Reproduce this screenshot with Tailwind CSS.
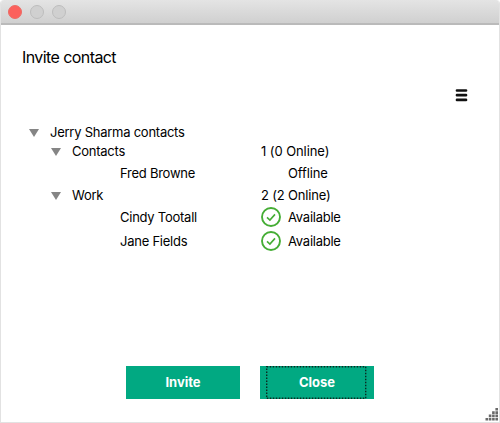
<!DOCTYPE html>
<html lang="en">
<head>
<meta charset="utf-8">
<title>Invite contact</title>
<script src="https://cdn.jsdelivr.net/npm/@tailwindcss/browser@4"></script>
</head>
<body class="bg-white">
<div class="relative flex h-[423px] w-[500px] flex-col overflow-hidden rounded-t-[4px] border-x border-b border-[#e2e2e2] bg-white font-['Inter',sans-serif] text-[13px] text-black">
  <header class="flex h-[25px] shrink-0 items-center gap-2 border-b-2 border-[#bababa] bg-linear-to-b from-[#e4e4e4] to-[#d0d0d0] pl-[7px]">
    <span class="size-3.5 rounded-full border border-[#ec6b65] bg-[#fc605c]"></span>
    <span class="size-3.5 rounded-full border border-[#bdbdbd] bg-[#d0d0d0]"></span>
    <span class="size-3.5 rounded-full border border-[#bdbdbd] bg-[#d0d0d0]"></span>
  </header>
  <main class="flex grow flex-col">
    <h1 class="mt-5 pl-[21px] text-[16px] leading-6 tracking-[-0.58px]">Invite contact</h1>
    <div class="mt-5 flex justify-end pr-[31px]">
      <svg class="h-[13px] w-[13px]" viewBox="0 0 13 13" stroke="#111" stroke-width="2.7" stroke-linecap="round"><path d="M2 1.5H11M2 6.2H11M2 10.9H11"/></svg>
    </div>
    <div class="mt-[21px] flex flex-col tracking-[-0.25px]">
      <div class="flex h-5 items-center pl-7"><svg class="mr-[11px] h-2 w-[10px]" viewBox="0 0 10 8" fill="#858585"><path d="M0 0H10L5 8Z"/></svg><span>Jerry Sharma contacts</span></div>
      <div class="flex h-[18px] items-center pl-[50px]"><svg class="mr-[11px] h-2 w-[10px]" viewBox="0 0 10 8" fill="#858585"><path d="M0 0H10L5 8Z"/></svg><span class="w-[189px]">Contacts</span><span class="tracking-[-0.08px]">1 (0 Online)</span></div>
      <div class="flex h-[26px] items-center pl-[119px]"><span class="w-[168px]">Fred Browne</span><span class="tracking-[-0.12px]">Offline</span></div>
      <div class="flex h-[18px] items-center pl-[50px]"><svg class="mr-[11px] h-2 w-[10px]" viewBox="0 0 10 8" fill="#858585"><path d="M0 0H10L5 8Z"/></svg><span class="w-[189px]">Work</span><span class="tracking-[-0.17px]">2 (2 Online)</span></div>
      <div class="flex h-[26px] items-center pl-[119px]"><span class="w-[141px]">Cindy Tootall</span><svg class="mr-[7px] mb-0.5 size-5" viewBox="0 0 20 20" fill="none" stroke="#45ad35"><circle cx="10" cy="10" r="9" stroke-width="1.9"/><path d="M6 10.3L8.9 13L14 7.4" stroke-width="1.6"/></svg><span>Available</span></div>
      <div class="flex h-[22px] items-center pl-[119px]"><span class="w-[141px]">Jane Fields</span><svg class="mr-[7px] mb-0.5 size-5" viewBox="0 0 20 20" fill="none" stroke="#45ad35"><circle cx="10" cy="10" r="9" stroke-width="1.9"/><path d="M6 10.3L8.9 13L14 7.4" stroke-width="1.6"/></svg><span>Available</span></div>
    </div>
    <div class="mt-auto mb-[23px] flex gap-5 pl-[125px] text-[13px] font-bold text-white">
      <button class="h-[33px] w-[114px] bg-[#01a982]">Invite</button>
      <button class="relative h-[33px] w-[114px] bg-[#01a982]"><svg class="absolute top-0 left-[6px] h-[33px] w-[101px]" viewBox="0 0 101 33" fill="none" stroke="#0b2a21" stroke-width="1.4" stroke-dasharray="1.5 1.5"><rect x="0.7" y="0.7" width="99" height="31.6"/></svg>Close</button>
    </div>
  </main>
  <svg class="absolute right-0 bottom-0 h-[14px] w-[14px]" viewBox="0 0 14 14" fill="#6a6a6a"><path d="M10.4 0h2.6v2.6h-2.6zM7.1 3.3h2.6v2.6h-2.6zM10.4 3.3h2.6v2.6h-2.6zM3.8 6.6h2.6v2.6h-2.6zM7.1 6.6h2.6v2.6h-2.6zM10.4 6.6h2.6v2.6h-2.6zM.5 9.9h2.6v2.6h-2.6zM3.8 9.9h2.6v2.6h-2.6zM7.1 9.9h2.6v2.6h-2.6zM10.4 9.9h2.6v2.6h-2.6z"/></svg>
</div>
</body>
</html>
